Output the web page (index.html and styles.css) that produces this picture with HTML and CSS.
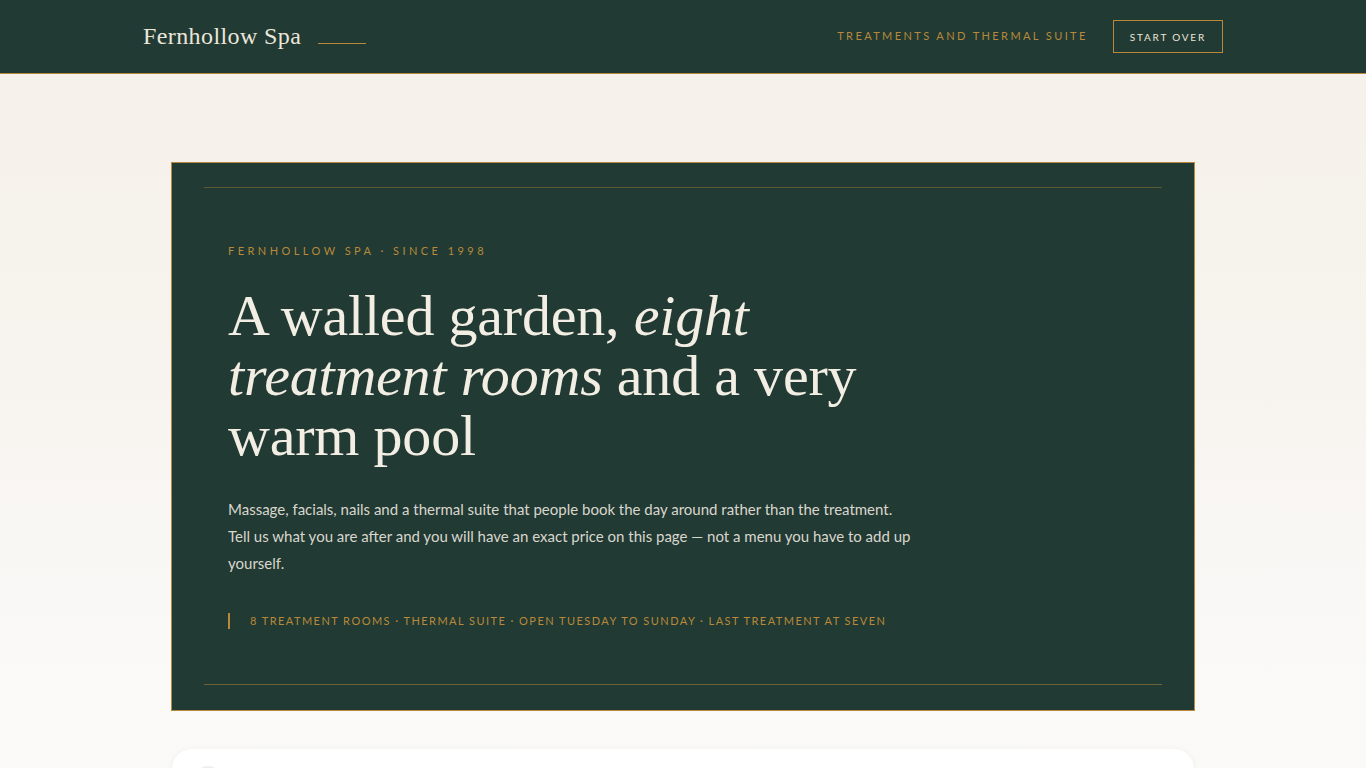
FILE: index.html
```html
<!DOCTYPE html>
<html lang="en">
<head>
<meta charset="utf-8">
<title>Fernhollow Spa</title>
<link rel="stylesheet" href="styles.css">
</head>
<body>
<header class="topbar">
  <div class="topbar-inner">
    <div class="brand">
      <span class="brand-name">Fernhollow Spa</span>
      <span class="brand-rule"></span>
    </div>
    <nav class="nav">
      <span class="nav-link">Treatments and thermal suite</span>
      <button class="nav-button">Start over</button>
    </nav>
  </div>
</header>
<main class="main">
  <section class="hero">
    <div class="hero-frame">
      <div class="hero-content">
        <p class="eyebrow">Fernhollow Spa · Since 1998</p>
        <h1 class="headline">A walled garden, <em>eight treatment rooms</em> and a very warm pool</h1>
        <p class="lede">Massage, facials, nails and a thermal suite that people book the day around rather than the treatment. Tell us what you are after and you will have an exact price on this page — not a menu you have to add up yourself.</p>
        <p class="facts">8 treatment rooms · Thermal suite · Open Tuesday to Sunday · Last treatment at seven</p>
      </div>
    </div>
  </section>
  <section class="card">
    <div class="step">
      <span class="step-num">1</span>
      <span class="step-title">Choose a treatment</span>
    </div>
  </section>
</main>
</body>
</html>
```
FILE: styles.css
```css
* { box-sizing: border-box; }
html, body { margin: 0; padding: 0; }
body {
  font-family: "Lato", "Liberation Sans", sans-serif;
  background: linear-gradient(180deg, #f6f1ea 0%, #f6f2ec 30%, #faf9f7 75%, #fafaf8 100%);
  min-height: 100vh;
  color: #213a33;
}
.topbar {
  background: #213a33;
  border-bottom: 1px solid #b8893a;
  height: 74px;
}
.topbar-inner {
  width: 1080px;
  margin: 0 auto;
  height: 73px;
  display: flex;
  align-items: center;
  justify-content: space-between;
}
.brand { display: flex; align-items: center; gap: 17px; }
.brand-name {
  font-family: "Liberation Serif", "DejaVu Serif", serif;
  font-size: 24px;
  color: #ece6da;
  letter-spacing: 0.4px;
}
.brand-rule {
  display: block;
  width: 48px;
  height: 1px;
  background: #b8893a;
  margin-top: 13px;
}
.nav { display: flex; align-items: center; gap: 25px; }
.nav-link {
  font-size: 11px;
  letter-spacing: 2.4px;
  text-transform: uppercase;
  color: #b8893a;
  margin-top: -2px;
}
.nav-button {
  font-family: "Lato", "Liberation Sans", sans-serif;
  background: transparent;
  border: 1px solid #b8893a;
  color: #ece6da;
  font-size: 10px;
  letter-spacing: 1.8px;
  text-transform: uppercase;
  height: 33px;
  padding: 0 16px;
  margin-right: 0;
}
.main { padding-top: 88px; }
.hero {
  width: 1024px;
  margin: 0 auto;
  background: #213a33;
  border: 1px solid #b8893a;
  padding: 24px 32px 25px;
}
.hero-frame {
  border-top: 1px solid rgba(184, 137, 58, 0.38);
  border-bottom: 1px solid rgba(184, 137, 58, 0.5);
  padding: 56px 24px 55px;
}
.hero-content { max-width: 686px; }
.eyebrow {
  margin: 0;
  font-size: 11px;
  letter-spacing: 3.45px;
  text-transform: uppercase;
  color: #b8893a;
  line-height: 14px;
}
.headline {
  margin: 28px 0 0;
  max-width: 680px;
  font-family: "Liberation Serif", "DejaVu Serif", serif;
  font-weight: 400;
  font-size: 58px;
  line-height: 60px;
  color: #f3eee4;
  letter-spacing: -0.2px;
}
.headline em { font-style: italic; }
.lede {
  margin: 30px 0 0;
  font-size: 15px;
  line-height: 27px;
  color: #d9d6cd;
}
.facts {
  margin: 36px 0 0;
  border-left: 2px solid #b8893a;
  padding-left: 20px;
  font-size: 11px;
  line-height: 16px;
  letter-spacing: 1.45px;
  text-transform: uppercase;
  color: #b8893a;
}
.card {
  width: 1022px;
  margin: 38px auto 40px;
  background: #ffffff;
  border-radius: 20px;
  box-shadow: 0 1px 6px rgba(33, 58, 51, 0.06);
  padding: 17px 20px 30px;
}
.step { display: flex; align-items: center; gap: 20px; }
.step-num {
  width: 32px;
  height: 32px;
  border-radius: 50%;
  background: #efefec;
  display: flex;
  align-items: center;
  justify-content: center;
  font-size: 13px;
  color: #213a33;
}
.step-title {
  font-family: "Liberation Serif", "DejaVu Serif", serif;
  font-size: 22px;
  color: #213a33;
}
```
